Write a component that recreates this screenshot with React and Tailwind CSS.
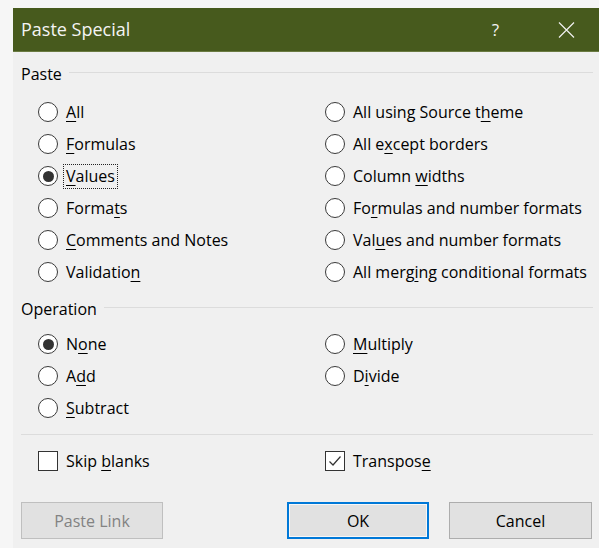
import React from 'react'

const font = { fontFamily: '"Segoe UI", "Open Sans", "Noto Sans", sans-serif' }

// label text with one underlined access key
function Label({ text, k }) {
  if (k == null) return <span>{text}</span>
  return (
    <span>
      {text.slice(0, k)}
      <u className="underline-offset-[3px]">{text[k]}</u>
      {text.slice(k + 1)}
    </span>
  )
}

function Radio({ text, k, checked, focus }) {
  return (
    <div className="h-8 flex items-center">
      <span className="w-[20px] h-[20px] rounded-full border-[1.5px] border-[#3a3a3a] bg-white flex items-center justify-center shrink-0">
        {checked && <span className="w-[11px] h-[11px] rounded-full bg-[#333]" />}
      </span>
      <span className={`ml-[5px] px-[2px] h-[25px] flex items-center border border-dotted ${focus ? 'border-[#222]' : 'border-transparent'}`}>
        <Label text={text} k={k} />
      </span>
    </div>
  )
}

function Check({ text, k, checked }) {
  return (
    <div className="h-8 flex items-center">
      <span className="w-[20px] h-[20px] border border-[#333] bg-white flex items-center justify-center shrink-0">
        {checked && (
          <svg width="16" height="16" viewBox="0 0 16 16" fill="none">
            <path d="M2.5 8.5 L6 12 L13.5 3.5" stroke="#333" strokeWidth="1.2" />
          </svg>
        )}
      </span>
      <span className="ml-[8px]">
        <Label text={text} k={k} />
      </span>
    </div>
  )
}

function Section({ title }) {
  return (
    <div className="h-5 flex items-center">
      <span>{title}</span>
      <div className="flex-1 h-px bg-[#dcdcdc] ml-[7px] mt-[-4px]" />
    </div>
  )
}

export default function App() {
  return (
    <div className="w-[599px] h-[548px] bg-[#f6f6f6] pl-[13px] pt-[8px] flex overflow-hidden text-[16px] text-black" style={font}>
      <div className="flex-1 bg-[#f0f0f0] flex flex-col">
        {/* title bar */}
        <div className="h-[44px] bg-[#475a1d] border-b border-[#6a7b42] flex items-center pl-[8px] text-[#f4f4f4]">
          <span className="text-[18px] flex-1">Paste Special</span>
          <span className="text-[17px] mr-[59px]">?</span>
          <svg width="17" height="16" viewBox="0 0 17 16" className="mr-[24px]">
            <path d="M1 0.5 L16 15.5 M16 0.5 L1 15.5" stroke="#f0f0f0" strokeWidth="1.2" />
          </svg>
        </div>

        <div className="pl-[8px] pr-[6px] pt-[12px] flex flex-col">
          <Section title="Paste" />
          <div className="grid grid-cols-[287px_1fr] mt-[12px] pl-[17px]">
            <div>
              <Radio text="All" k={0} />
              <Radio text="Formulas" k={0} />
              <Radio text="Values" k={0} checked focus />
              <Radio text="Formats" k={5} />
              <Radio text="Comments and Notes" k={0} />
              <Radio text="Validation" k={9} />
            </div>
            <div>
              <Radio text="All using Source theme" k={18} />
              <Radio text="All except borders" k={5} />
              <Radio text="Column widths" k={7} />
              <Radio text="Formulas and number formats" k={2} />
              <Radio text="Values and number formats" k={3} />
              <Radio text="All merging conditional formats" k={8} />
            </div>
          </div>

          <div className="mt-[11px]">
            <Section title="Operation" />
          </div>
          <div className="grid grid-cols-[287px_1fr] mt-[9px] pl-[17px]">
            <div>
              <Radio text="None" k={1} checked />
              <Radio text="Add" k={1} />
              <Radio text="Subtract" k={0} />
            </div>
            <div>
              <Radio text="Multiply" k={0} />
              <Radio text="Divide" k={1} />
            </div>
          </div>

          <div className="h-px bg-[#dcdcdc] mt-[10px]" />

          <div className="grid grid-cols-[287px_1fr] mt-[10px] pl-[17px]">
            <Check text="Skip blanks" k={5} />
            <Check text="Transpose" k={8} checked />
          </div>

          <div className="flex mt-[25px]">
            <button className="w-[142px] h-[37px] bg-[#e1e1e1] border border-[#bfbfbf] text-[#838383]">Paste Link</button>
            <button className="w-[142px] h-[37px] ml-[124px] bg-[#e1e1e1] border-2 border-[#0078d7] shadow-[inset_0_0_0_1px_#f7f7f7]">OK</button>
            <button className="w-[143px] h-[37px] ml-[20px] bg-[#e1e1e1] border border-[#adadad]">Cancel</button>
          </div>
        </div>
      </div>
    </div>
  )
}
